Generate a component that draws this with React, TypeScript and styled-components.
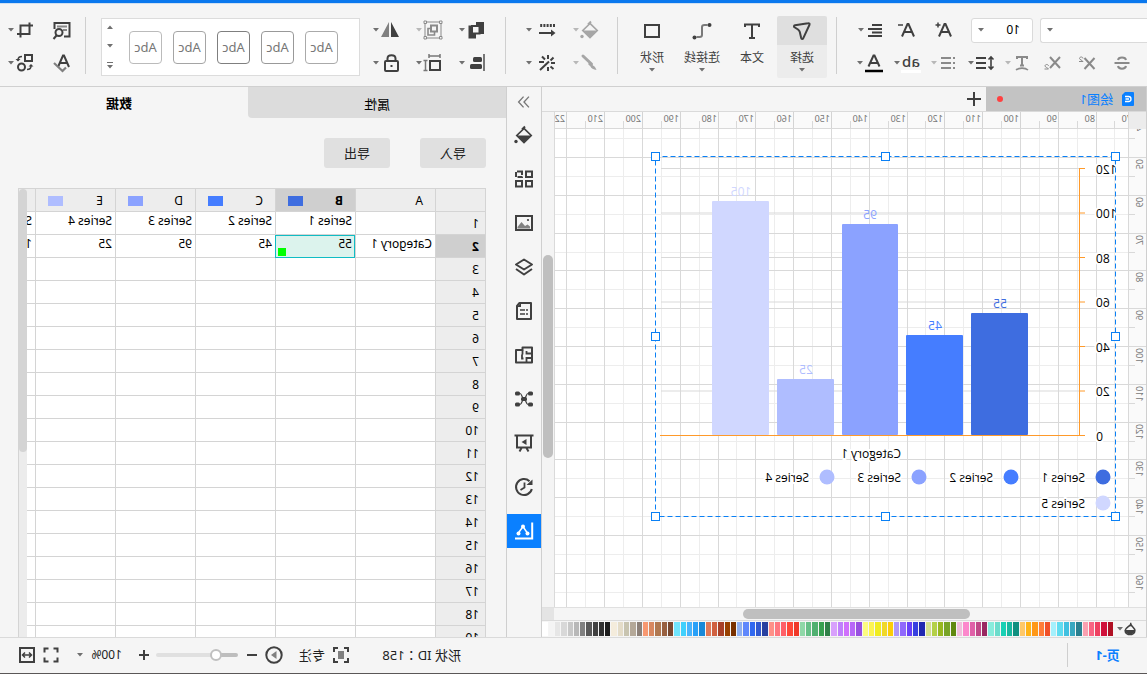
import React, { useLayoutEffect, useRef, useState } from "react";
import styled, { createGlobalStyle, css } from "styled-components";

const GlobalStyle = createGlobalStyle`
  * { box-sizing: border-box; }
  body { margin: 0; background: #f5f5f5; overflow: hidden; }
  button, select, input { font: inherit; color: inherit; margin: 0; }
  button { border: 0; padding: 0; background: none; cursor: pointer; }
`;

const sans = `"Noto Sans", "Noto Sans CJK SC", sans-serif`;

/* The whole workspace is presented flipped from left to right. */
const Shell = styled.div`
  display: flex;
  flex-direction: column;
  height: 100vh;
  overflow: hidden;
  transform: scaleX(-1);
  background: #f5f5f5;
  color: #000;
  font: 12px/16px ${sans};
  border-bottom: 1px solid #5a5757;
`;

const TopBar = styled.div`
  flex: none;
  height: 4px;
  background: #0a78ee;
  border-bottom: 1px solid #cfe0f2;
`;

/* ---------- toolbar ---------- */

const Toolbar = styled.header`
  flex: none;
  display: flex;
  align-items: flex-start;
  height: 83px;
  padding-top: 13px;
  border-bottom: 1px solid #d0d0d0;
  color: #404040;
`;

const Rows = styled.div<{ $width?: number }>`
  flex: none;
  display: flex;
  flex-direction: column;
  gap: 7px;
  width: ${(p) => (p.$width ? `${p.$width}px` : "auto")};
`;

const Row = styled.div<{ $gap: number; $indent?: number }>`
  display: flex;
  align-items: center;
  height: 26px;
  gap: ${(p) => p.$gap}px;
  padding-left: ${(p) => p.$indent ?? 0}px;
`;

const Separator = styled.div<{ $before: number; $after: number }>`
  flex: none;
  width: 1px;
  height: 57px;
  background: #cfcfcf;
  margin: 0 ${(p) => p.$after}px 0 ${(p) => p.$before}px;
`;

const Tool = styled.button<{ $dim?: boolean; $wide?: boolean }>`
  display: flex;
  align-items: center;
  gap: ${(p) => (p.$wide ? 5 : 1)}px;
  height: 26px;
  color: ${(p) => (p.$dim ? "#a6a6a6" : "#404040")};
`;

const Picker = styled.div<{ $width: number; $flat?: boolean }>`
  display: grid;
  align-items: center;
  width: ${(p) => p.$width}px;
  height: 25px;
  border: 1px solid #dadada;
  border-left-width: ${(p) => (p.$flat ? 0 : 1)}px;
  border-radius: ${(p) => (p.$flat ? "0 3px 3px 0" : "3px")};
  background: #fff;
  > * { grid-area: 1 / 1; }
  > svg { justify-self: end; margin-right: 6px; pointer-events: none; }
  select {
    appearance: none;
    width: 100%;
    height: 23px;
    border: 0;
    padding: 0 12px;
    background: transparent;
    color: #000;
  }
`;

const BigTool = styled.button<{ $active?: boolean }>`
  flex: none;
  display: grid;
  grid-template-rows: 29px 23px 4px;
  place-items: center;
  align-content: start;
  width: 50px;
  height: 62px;
  margin-top: -1px;
  border-radius: 2px;
  color: #404040;
  white-space: nowrap;
  span { padding-top: 2px; }
  ${(p) =>
    p.$active &&
    css`
      background: linear-gradient(#dfdfdf 29px, #ececec 29px);
    `}
`;

const Gallery = styled.div`
  flex: none;
  display: flex;
  align-items: center;
  gap: 11px;
  width: 259px;
  height: 58px;
  margin: 1px 0 0 13px;
  padding-left: 21px;
  border: 1px solid #dcdcdc;
  background: #fff;
`;

const Preset = styled.button<{ $edge: string }>`
  width: 33px;
  height: 33px;
  border: 1px solid ${(p) => p.$edge};
  border-radius: 4px;
  color: #777;
  font-size: 13px;
`;

const GalleryScroll = styled.div`
  display: flex;
  flex-direction: column;
  align-items: center;
  justify-content: space-between;
  height: 44px;
  margin-left: 5px;
  button { display: flex; }
`;

const Caret = ({ dim, up }: { dim?: boolean; up?: boolean }) => (
  <svg width="6" height="4" viewBox="0 0 6 4" aria-hidden="true">
    <path d={up ? "M0 4h6L3 .5z" : "M0 0h6L3 3.500z"} fill={dim ? "#b8b8b8" : "#707070"} />
  </svg>
);

const Icon = ({ children, size = 20 }: { children: React.ReactNode; size?: number }) => (
  <svg width={size} height={size} viewBox="0 0 20 20" fill="none" stroke="currentColor" strokeWidth="2" aria-hidden="true">
    {children}
  </svg>
);

const solid = { fill: "currentColor", stroke: "none" } as const;
const faint = { fill: "#808080", stroke: "none" } as const;

const icons: Record<string, React.ReactNode> = {
  bigger: (<><path d="M3 16.500 8.500 4h1L15 16.500M5.200 12h7.600" /><path d="M13.500 5h5M16 2.500v5" strokeWidth="1.500" /></>),
  smaller: (<><path d="M3 16.500 8.500 4h1L15 16.500M5.200 12h7.600" /><path d="M14 5h5" strokeWidth="1.500" /></>),
  align: <path d="M3 5h10M3 9h14M3 12.500h10M3 16h14" />,
  strike: (<g stroke="#8a8a8a"><path d="M2.500 10h15" /><path d="M14 7C13.500 3.500 6.500 3.500 6 7M6 13c.5 3.500 7.500 3.500 8 0" /></g>),
  sup: (<g stroke="#8a8a8a"><path d="M2.500 5l10 11M12.500 5 2.500 16" /><path d="M14 5.500c0-2 3.500-2 3.500 0 0 1.200-3 1.800-3.500 3h4" strokeWidth="1" /></g>),
  sub: (<g stroke="#8a8a8a"><path d="M2 4l10 11M12 4 2 15" /><path d="M13.500 13c0-2 3.500-2 3.500 0 0 1.200-3 1.800-3.500 3h4" strokeWidth="1" /></g>),
  curveText: (<g stroke="#8a8a8a"><path d="M5 4h10M10 4v9M8 12.500h4M5 3v3M15 3v3" /><path d="M4 17c3-2.500 9-2.500 12 0" strokeWidth="1.600" /></g>),
  spacing: (<><path d="M9 5h10M9 10h10M9 15h10" /><path d="M4 4v12M1.500 6.500 4 4l2.500 2.500M1.500 13.500 4 16l2.500-2.500" strokeWidth="1.600" /></>),
  list: (<g stroke="#8a8a8a"><path d="M7 5h10M7 10h10M7 15h10" /><path d="M3 5h2M3 10h2M3 15h2" /></g>),
  color: (<><path d="M4.500 13.500 9.500 2.500h1l5 11M6.500 10h7" /><path d="M1 18h18" stroke="#000" strokeWidth="2.500" /></>),
  cursor: <path d="M2.500 3.800C2 2.800 3 2 4 2.200L17 4.300c1.200.2 1.400 1.300.5 2L14 8.500c-1 .8-1.500 1.300-1.800 2.500L10.800 17c-.3 1.100-1.500 1.300-2 .3z" />,
  text: <path d="M3 6V3.500h14V6M10 3.500v13M7 17h6" />,
  connector: (<><path d="M4.500 4h3c2 0 2.500.5 2.500 2v8c0 1.500.5 2 2.500 2h3" stroke="#7a7a7a" /><circle cx="2.500" cy="4" r="2" {...solid} /><circle cx="17.500" cy="16.500" r="2" {...solid} /></>),
  shape: <rect x="3" y="4" width="14" height="12" />,
  bucket: (<><path d="M9 1.500l3 3" /><path d="M10 3.500 17.200 10.500 10 17.500 2.800 10.500z" strokeWidth="1.700" /><path d="M3 10.500h14l-7 7z" {...solid} /><circle cx="18" cy="16.500" r="1.700" {...solid} /></>),
  drop: (<><path d="M9 1v5" /><path d="M9 3.500C12 7 17 9 17 12c0 4-4 6-7 6s-7-2-7-6c0-3 4-5 6-8.500z" strokeWidth="2.200" /><path d="M3 11.500h14c0 4-4 6.500-7 6.500s-7-2.500-7-6.500z" {...solid} /></>),
  lineStyle: (<><path d="M5 13h13" /><path d="M6 9.500 1.500 13 6 16.500z" {...solid} /><path d="M2 5.500h16" strokeWidth="3" strokeDasharray="2 1.200" /></>),
  brush: (<><path d="M17 3 8.500 11" strokeWidth="3" strokeLinecap="round" /><path d="M10 9 7 12.500c-2 .5-2.500 2.500-3.500 4.500 3-.5 5.500-1.500 6-3.500l2.500-2.500z" {...solid} /></>),
  sparkle: <path d="M8 8.500l9 8.500M9 2v4M9 14v4M2 10h4M13 9h5M3.500 4.500l3 3M15 3.500l-3 3M3.500 16l3-2.500" />,
  front: (<><path d="M2 2h8v3.500h7.500V18.500H10V14H2z" {...solid} /><rect x="6.500" y="6" width="7.500" height="7.500" fill="#f5f5f5" /></>),
  group: (<g stroke="#8a8a8a"><rect x="2" y="2" width="16" height="16" strokeWidth="1" /><rect x="6" y="5.500" width="6" height="6" /><path d="M12 8.500h3V15H8.500v-3.500" strokeWidth="1.600" /><path d="M1 1h2.500v2.500H1zM16.500 1H19v2.500h-2.500zM1 16.500h2.500V19H1zM16.500 16.500H19V19h-2.500z" fill="#f5f5f5" strokeWidth="1" /></g>),
  flip: (<><path d="M9 2v15H1z" {...solid} /><path d="M11 2v15h8z" {...faint} /></>),
  alignObj: (<><path d="M2 1v17" stroke="#777" /><rect x="4" y="4" width="9" height="5" rx="1.500" {...solid} /><rect x="4" y="11" width="12" height="5" rx="1.500" {...solid} /></>),
  sizeObj: (<><rect x="3" y="8" width="10" height="9" /><path d="M3 3h11M3 1v4M14 1v4M17.500 7.500v10M15.500 7.500h4M15.500 17.500h4" stroke="#777" strokeWidth="1.500" /></>),
  lock: (<><rect x="2" y="8" width="13" height="10" rx="1" /><path d="M4.500 8V5.500c0-4.500 8-4.500 8 0V8" /><path d="M7.500 12h2v2h-2z" {...solid} /></>),
  findDoc: (<><path d="M8 16.500H2.500V3h15v6" /><path d="M5 6.500h10M5 10h4" stroke="#888" /><circle cx="13" cy="12.500" r="3.500" /><path d="M15.500 15.500 18.500 19" /></>),
  spell: (<><path d="M3 14 8 2.500h1L14 14M5 10h7" /><path d="M6 14.500l3.500 3.500L18 10" stroke="#808080" strokeWidth="2.200" /></>),
  crop: <path d="M2 5.500h12.500v12M5.500 2.500V14H18" />,
  swap: (<><rect x="3" y="2" width="7" height="6" /><circle cx="13.500" cy="14" r="3.500" /><path d="M13 3.500c2.500 0 4 1 4 3.500M8 16.500c-3 0-4-1-4-3.500" strokeWidth="1.500" /><path d="M14.500 6h5L17 8.500zM1.500 13.500h5L4 11z" {...solid} /></>),
  tiles: (<><path d="M2 2.500h6v5.500H2zM2 12h6v5.500H2zM12 12h6v5.500h-6z" /><path d="M12 2.500h6v5.500h-6z" strokeDasharray="5 1.500" /></>),
  image: (<><rect x="2" y="3" width="16" height="14" /><path d="M4 15.500v-2l2.500-2 2.500 1.500 3.500-4 4 5v1.500z" {...faint} /><circle cx="6" cy="7" r="1.100" {...solid} /></>),
  layers: (<><path d="M10 2.500 18 7.500 10 12.500 2 7.500z" strokeLinejoin="round" /><path d="M2 12l8 5.500 8-5.500" strokeLinejoin="round" /></>),
  page: (<><path d="M3 2h11.500l2.500 3v13H3z" strokeLinejoin="round" /><path d="M13 2v4h4z" {...solid} /><path d="M6 9h2M9 9h5M6 13h2M9 13h5" strokeWidth="1.600" /></>),
  plan: (<><path d="M2 2.500h9.500V5H18v12.500H2z" strokeLinejoin="round" /><path d="M2 8.500h5.500V6M11.500 5v4.500M2 13h5.500v4.500M12 9.500v4h-1.500" strokeWidth="1.800" /></>),
  network: (<><path d="M4 4.500h2c2 0 2 5.500 4 5.500s2-5.500 4-5.500h2M4 15.500h2c2 0 2-5.500 4-5.500s2 5.500 4 5.500h2" strokeWidth="1.200" /><rect x="1" y="2.500" width="5" height="4" rx="1.500" {...solid} /><rect x="14" y="2.500" width="5" height="4" rx="1.500" {...solid} /><rect x="1" y="13.500" width="5" height="4" rx="1.500" {...solid} /><rect x="14" y="13.500" width="5" height="4" rx="1.500" {...solid} /><rect x="7" y="8" width="6" height="4" rx="1.500" {...solid} /></>),
  board: (<><path d="M.500 2.500h19M3 3v11.500h14V3M7.500 15 5.500 18.500M12.500 15l2 3.500" /><path d="M12.500 9l-5-3v6z" {...solid} /></>),
  history: (<><path d="M4.500 4.200A8 8 0 1 1 2.200 12" /><path d="M1.500 2.500v5.500h6z" {...solid} /><path d="M9.500 5.500v5l4 2.500" strokeWidth="1.800" /></>),
  chart: (<><path d="M1.800 1.500v16H19" stroke="#fff" /><path d="M6 13l5-7.500 5 7" stroke="#fff" strokeWidth="1.500" /><circle cx="6.500" cy="12.500" r="2" fill="#fff" stroke="none" /><circle cx="11" cy="5.500" r="2" fill="#fff" stroke="none" /><circle cx="15.500" cy="12.500" r="2" fill="#fff" stroke="none" /></>),
  collapse: <path d="M4.500 4 10 10l-5.500 6M10.500 4l5.500 6-5.500 6" stroke="#777" strokeWidth="1.500" />,
  plus: <path d="M3 10h14M10 3v14" />,
  focus: (<><path d="M3 7V3h4M13 3h4v4M17 13v4h-4M7 17H3v-4" /><rect x="7" y="6" width="6" height="8" {...faint} /></>),
  play: (<><circle cx="10" cy="10" r="7.700" /><path d="M7.500 6v8l5.500-4z" {...faint} /></>),
  minus: <path d="M5 10h10" />,
  add: <path d="M5 10h10M10 5v10" />,
  fit: <path d="M3.500 7.500v-4h4M12.500 3.500h4v4M16.500 12.500v4h-4M7.500 16.500h-4v-4" />,
  fitWidth: (<><rect x="3" y="3" width="14" height="14" /><path d="M6 10h8M8 7.500 5.500 10 8 12.500M12 7.500l2.500 2.500-2.500 2.500" strokeWidth="1.500" /></>),
};

const IconTool = ({ name, label, dim, caret, wide }: { name: string; label: string; dim?: boolean; caret?: boolean; wide?: boolean }) => (
  <Tool type="button" aria-label={label} $dim={dim} $wide={wide}>
    <Icon>{icons[name]}</Icon>
    {caret && <Caret dim={dim} />}
  </Tool>
);

const BoldLetters = styled.span`
  width: 20px;
  height: 20px;
  border-bottom: 3px solid #fff;
  font-size: 15px;
  line-height: 16px;
  font-weight: 500;
  text-align: center;
`;

/* ---------- work area ---------- */

const Main = styled.main`
  flex: 1;
  display: flex;
  min-height: 0;
`;

const Editor = styled.section`
  flex: 1;
  min-width: 0;
  display: flex;
  flex-direction: column;
  border-left: 1px solid #cfcfcf;
  border-right: 1px solid #cfcfcf;
`;

const DocTabs = styled.div`
  flex: none;
  display: flex;
  align-items: center;
  height: 25px;
  border-bottom: 1px solid #dadada;
`;

const DocTab = styled.button`
  display: flex;
  align-items: center;
  width: 160px;
  height: 24px;
  padding: 0 11px 0 12px;
  gap: 9px;
  background: #c3c3c3;
  color: #0a80ff;
  font-size: 13px;
`;

const Dot = styled.span`
  width: 6px;
  height: 6px;
  margin-left: auto;
  border-radius: 50%;
  background: #ff4040;
`;

const AddTab = styled.button`
  display: flex;
  margin-left: 2px;
  color: #404040;
`;

const SheetRow = styled.div`
  flex: 1;
  display: flex;
  min-height: 0;
`;

const Sheet = styled.svg`
  flex: 1;
  min-width: 0;
  height: 100%;
  background: #fff;
  border-right: 1px solid #dadada;
  font: 12px "Open Sans", "Noto Sans", sans-serif;
`;

const VTrack = styled.div`
  width: 12px;
  padding: 143px 1px 0;
  background: #f4f4f4;
`;

const VThumb = styled.div`
  height: 203px;
  border-radius: 5px;
  background: #bfbfbf;
`;

const HTrack = styled.div`
  flex: none;
  display: flex;
  align-items: center;
  height: 14px;
  padding-left: 176px;
  border-top: 1px solid #e0e0e0;
  border-bottom: 1px solid #dadada;
`;

const HThumb = styled.div`
  width: 227px;
  height: 10px;
  border-radius: 5px;
  background: #bfbfbf;
`;

const Corner = styled.div`
  width: 12px;
  height: 12px;
  margin-left: auto;
  background: #e4e4e4;
`;

const Palette = styled.div`
  flex: none;
  display: flex;
  align-items: center;
  height: 16px;
`;

const PaletteTool = styled.button`
  display: flex;
  align-items: center;
  width: 33px;
  padding-left: 9px;
  color: #404040;
`;

const Swatches = styled.div`
  flex: 1;
  display: flex;
  gap: 1px;
  height: 14px;
`;

const Swatch = styled.button<{ $c: string }>`
  flex: 1;
  background: ${(p) => p.$c};
`;

const palette = (
  "b01024 d0103a ee4060 f96482 f9a0b0 2a8090 38a8c0 40c0e0 60dcf0 a4f0fc f05028 ff7c38 ff9818 ffb418 ffc868 " +
  "109080 18b8a0 18d0b4 6cdccc 88ecdc 982860 c04888 e060a8 fc88cc f0c0dc 608810 78a428 98b820 b4d048 d4e090 " +
  "2028b0 3840e0 6840f8 9068fc b098f8 fccc08 f0d828 f0ec20 fcf450 fcfc80 9850e0 b868f8 d070fc c080fc d8a0fc " +
  "308048 38a050 50b070 68c088 90d8a8 f03828 ff4838 ff6068 ff7880 ff9088 2840a0 3058d0 3068f0 6088fc 90b0f0 " +
  "783000 984000 a84028 d06040 e07858 1888d8 28a0f8 48b4fc 40d0fc 70e4fc 784830 986040 b07850 d88860 f89870 " +
  "8c8078 b4a898 c8c4b0 e4dcc8 f4ecdc 1c1c1c 303030 404040 585858 808080 b8b8b8 c8c8c8 d8d8d8 e6e6e6 f4f4f4 ffffff"
).split(" ");

const Halo = styled.text`
  paint-order: stroke;
  stroke: #fff;
  stroke-width: 4px;
  stroke-linejoin: round;
`;

const STEP = 37.8;
const series = [
  { name: "Series 1", value: 55, x: 119, w: 57, top: 313, color: "#3e6de0" },
  { name: "Series 2", value: 45, x: 184, w: 57, top: 335, color: "#457dff" },
  { name: "Series 3", value: 95, x: 249, w: 56, top: 224, color: "#8ba2ff" },
  { name: "Series 4", value: 25, x: 313, w: 57, top: 379, color: "#afbdff" },
  { name: "Series 5", value: 105, x: 378, w: 57, top: 201, color: "#d0d7ff" },
];

const range = (n: number) => Array.from({ length: n }, (_, i) => i);

const Drawing = () => {
  const ref = useRef<SVGSVGElement>(null);
  const [size, setSize] = useState({ w: 590, h: 495 });
  useLayoutEffect(() => {
    const node = ref.current;
    if (!node) return;
    const measure = () => setSize({ w: node.clientWidth || 590, h: node.clientHeight || 495 });
    measure();
    const observer = new ResizeObserver(measure);
    observer.observe(node);
    return () => observer.disconnect();
  }, []);

  const cols = range(Math.ceil((size.w - 12) / STEP)).map((i) => ({ v: 70 + i * 10, major: Math.round(12.6 + i * STEP), minor: Math.round(31.5 + i * STEP) }));
  const rows = range(Math.ceil((size.h - 7) / STEP)).map((i) => ({ v: 40 + i * 10, major: Math.round(119.2 + i * STEP), minor: Math.round(138.1 + i * STEP) }));
  const ticks = range(7).map((i) => ({ v: 120 - i * 20, y: 168.5 + i * 44.5 }));
  return (
    <Sheet ref={ref} role="img" aria-label="Category 1">
      <defs>
        <clipPath id="side"><rect x="1" y="129" width="18" height="2000" /></clipPath>
        <clipPath id="head"><rect x="19" y="112" width="4000" height="17" /></clipPath>
      </defs>
      <g transform="translate(-1 -112)">
        <g shapeRendering="crispEdges">
          {cols.map((c) => <rect key={c.v} x={c.minor} y="129" width="1" height="2000" fill="#ededed" />)}
          {rows.map((r) => <rect key={r.v} x="19" y={r.minor} width="4000" height="1" fill="#ededed" />)}
          {cols.map((c) => <rect key={c.v} x={c.major} y="129" width="1" height="2000" fill="#d9d9d9" />)}
          {rows.map((r) => <rect key={r.v} x="19" y={r.major} width="4000" height="1" fill="#d9d9d9" />)}
          <rect x="1" y="112" width="4000" height="16" fill="#fafafa" />
          <rect x="1" y="129" width="17" height="2000" fill="#fafafa" />
          <rect x="1" y="128" width="4000" height="1" fill="#d9d9d9" />
          <rect x="18" y="112" width="1" height="2000" fill="#d9d9d9" />
          <rect x="1" y="112" width="17" height="17" fill="#ececec" />
        </g>
        <g clipPath="url(#head)" fontSize="9" fill="#777" fontFamily="Noto Sans">
          {cols.map((c) => (
            <g key={c.v}>
              <rect x={c.major} y="112" width="1" height="16" fill="#d4d4d4" />
              <rect x={c.minor} y="121" width="1" height="7" fill="#d9d9d9" />
              <text x={c.major + 2} y="122">{c.v}</text>
            </g>
          ))}
        </g>
        <g clipPath="url(#side)" fontSize="9" fill="#777" fontFamily="Noto Sans">
          {rows.map((r) => (
            <g key={r.v}>
              <rect x="1" y={r.major} width="17" height="1" fill="#d9d9d9" />
              <rect x="12" y={r.minor} width="6" height="1" fill="#d9d9d9" />
              <text transform={`translate(11 ${r.major + 2}) rotate(-90)`} textAnchor="end">{r.v}</text>
            </g>
          ))}
        </g>

        {ticks.map((t) => <path key={t.v} d={`M68 ${t.y}H486`} stroke="#d9d9d9" />)}
        <path d="M67.500 168V436M62 435.500H487" stroke="#ff9a2a" fill="none" />
        {ticks.map((t) => <path key={t.v} d={`M62 ${t.y}H67`} stroke="#ff9a2a" />)}
        {ticks.map((t) => <Halo key={t.v} x="51" y={Math.round(t.y + 5)} textAnchor="end">{t.v}</Halo>)}
        {series.map((s) => (
          <g key={s.name} fill={s.color}>
            <rect x={s.x} y={s.top} width={s.w} height={435 - s.top} rx="1" />
            <text x={s.x + 28} y={s.top - 5} textAnchor="middle">{s.value}</text>
          </g>
        ))}
        <Halo x="276" y="458" textAnchor="middle">Category 1</Halo>
        {series.map((s, i) => {
          const x = 44 + (i % 4) * 92;
          const y = i < 4 ? 477 : 503;
          return (
            <g key={s.name}>
              <circle cx={x} cy={y} r="7.500" fill={s.color} />
              <Halo x={x + 18} y={y + 5}>{s.name}</Halo>
            </g>
          );
        })}

        <rect x="31.500" y="156.500" width="460" height="360" fill="none" stroke="#0a80f5" strokeDasharray="5 3" />
        {[31, 261, 491].flatMap((x) =>
          [156, 336, 516]
            .filter((y) => !(x === 261 && y === 336))
            .map((y) => <rect key={`${x}-${y}`} x={x - 3.5} y={y - 3.5} width="8" height="8" fill="#fff" stroke="#0a80f5" />),
        )}
      </g>
    </Sheet>
  );
};

/* ---------- side rail ---------- */

const Rail = styled.nav`
  flex: none;
  display: flex;
  flex-direction: column;
  align-items: center;
  gap: 10px;
  width: 35px;
  border-right: 1px solid #cfcfcf;
  color: #404040;
`;

const RailButton = styled.button<{ $active?: boolean; $small?: boolean }>`
  display: grid;
  place-items: center;
  width: 34px;
  height: ${(p) => (p.$small ? 18 : 34)}px;
  margin-top: ${(p) => (p.$small ? 6 : 0)}px;
  margin-bottom: ${(p) => (p.$small ? -3 : 0)}px;
  background: ${(p) => (p.$active ? "#0a80ff" : "transparent")};
`;

const rail: [string, string][] = [
  ["bucket", "填充"], ["tiles", "符号"], ["image", "图片"], ["layers", "图层"], ["page", "页面"],
  ["plan", "平面图"], ["network", "连接"], ["board", "演示"], ["history", "历史"], ["chart", "图表"],
];

/* ---------- data panel ---------- */

const Panel = styled.aside`
  flex: none;
  display: flex;
  flex-direction: column;
  width: 506px;
  min-height: 0;
`;

const PanelTabs = styled.div`
  flex: none;
  display: flex;
  height: 31px;
`;

const PanelTab = styled.button<{ $active?: boolean }>`
  flex: 1;
  padding: 2px 0 0;
  color: #000;
  font-size: 13px;
  font-weight: 400;
  background: #dcdcdc;
  border-radius: 0 0 4px 0;
  ${(p) =>
    p.$active
      ? css`
          padding: 0 0 0 10px;
          font-weight: 700;
          background: transparent;
        `
      : css`
          flex: 0 0 258px;
        `}
`;

const Actions = styled.div`
  display: flex;
  gap: 30px;
  padding: 20px;
`;

const Action = styled.button`
  width: 66px;
  height: 30px;
  border-radius: 3px;
  background: #e0e0e0;
  color: #222;
  font-size: 13px;
`;

const GridArea = styled.div`
  flex: 1;
  display: flex;
  min-height: 0;
  margin: 0 18px 0 20px;
  border: solid #d4d4d4;
  border-width: 1px 1px 0 1px;
  overflow: hidden;
`;

const GridClip = styled.div`
  flex: 1;
  min-width: 0;
  overflow: hidden;
`;

const DataTable = styled.table`
  width: 530px;
  table-layout: fixed;
  border-collapse: separate;
  border-spacing: 0;
  background: #fff;
  tr { height: 23px; }
  th, td {
    height: 23px;
    padding: 0;
    border: solid #d4d4d4;
    border-width: 0 1px 1px 0;
    text-align: left;
    font-weight: 400;
    overflow: hidden;
    white-space: nowrap;
  }
  td { vertical-align: top; padding: 1px 0 0 3px; }
`;

const RowHead = styled.th<{ $on?: boolean }>`
  && {
    width: 50px;
    padding: 2px 0 0 6px;
    background: ${(p) => (p.$on ? "#cfcfcf" : "#ededed")};
    font-weight: ${(p) => (p.$on ? 700 : 400)};
  }
`;

const ColHead = styled.th<{ $on?: boolean }>`
  && {
    width: 80px;
    background: ${(p) => (p.$on ? "#cfcfcf" : "#ededed")};
    font-weight: ${(p) => (p.$on ? 700 : 400)};
  }
`;

const ColHeadInner = styled.div`
  display: flex;
  align-items: center;
  justify-content: space-between;
  padding: 1px 12px 0;
`;

const Chip = styled.span<{ $c: string }>`
  width: 15px;
  height: 10px;
  background: ${(p) => p.$c};
`;

const ActiveCell = styled.td`
  && {
    background: linear-gradient(#00ff00, #00ff00) right 2px bottom 1px / 8px 8px no-repeat #dcf3ed;
    border-color: #10bcc4;
    box-shadow: inset 1px 1px #10bcc4;
  }
`;

const GridTrack = styled.div`
  flex: none;
  width: 8px;
  background: #ececec;
`;

const GridThumb = styled.div`
  height: 263px;
  border-radius: 4px;
  background: #d4d4d4;
`;

const heads = ["A", "B", "C", "D", "E", "F"];
const cells: Record<number, string[]> = {
  1: ["", ...series.map((s) => s.name)],
  2: ["Category 1", ...series.map((s) => String(s.value))],
};

/* ---------- status bar ---------- */

const Status = styled.footer`
  flex: none;
  display: flex;
  align-items: center;
  height: 36px;
  padding-bottom: 2px;
  border-top: 1px solid #dadada;
  font-size: 13px;
`;

const PageTab = styled.button`
  width: 79px;
  color: #0a80ff;
  font-weight: 700;
`;

const StatusRule = styled.div`
  width: 1px;
  height: 24px;
  background: #cfcfcf;
`;

const StatusRight = styled.div`
  display: flex;
  align-items: center;
  width: 461px;
  margin-left: auto;
  button { display: flex; align-items: center; color: #404040; }
`;

const ShapeId = styled.span`
  width: 110px;
  color: #222;
  font-family: "Noto Sans", "Noto Sans CJK TC", sans-serif;
`;

const FocusTool = styled.button`
  gap: 6px;
  margin-right: 15px;
  span { color: #222; }
`;

const StepDown = styled.button`
  padding: 0 2px;
`;

const Zoom = styled.input`
  appearance: none;
  width: 82px;
  height: 4px;
  && { margin: 0 2px; }
  border-radius: 2px;
  background: linear-gradient(90deg, #bdbdbd 22px, #e0e0e0 22px);
  &::-webkit-slider-thumb {
    appearance: none;
    width: 12px;
    height: 12px;
    border: 2px solid #c0c0c0;
    border-radius: 50%;
    background: #fff;
  }
`;

const Percent = styled.button`
  gap: 8px;
  && { margin: 0 16px 0 12px; }
  font-size: 12px;
  span { color: #222; }
`;

const FitTools = styled.div`
  display: flex;
  gap: 4px;
`;

export default function App() {
  return (
    <>
      <GlobalStyle />
      <Shell>
        <TopBar />
        <Toolbar>
          <Rows $width={300}>
            <Row $gap={17}>
              <Row $gap={7}>
                <Picker $width={107} $flat>
                  <select aria-label="字体"><option> </option></select>
                  <Caret />
                </Picker>
                <Picker $width={62}>
                  <select aria-label="字号"><option>10</option></select>
                  <Caret />
                </Picker>
              </Row>
              <IconTool name="bigger" label="增大字号" />
              <Row $gap={12}>
                <IconTool name="smaller" label="减小字号" />
                <IconTool name="align" label="对齐" caret />
              </Row>
            </Row>
            <Row $gap={10} $indent={15}>
              <Row $gap={15}>
                <IconTool name="strike" label="删除线" dim />
                <IconTool name="sup" label="上标" dim />
                <IconTool name="sub" label="下标" dim />
              </Row>
              <Row $gap={10}>
                <IconTool name="curveText" label="弧形文字" dim caret />
                <IconTool name="spacing" label="行距" caret />
                <IconTool name="list" label="列表" dim caret />
                <Tool type="button" aria-label="高亮"><BoldLetters>ab</BoldLetters><Caret /></Tool>
                <IconTool name="color" label="字体颜色" caret />
              </Row>
            </Row>
          </Rows>
          <Separator $before={10} $after={9} />
          <BigTool type="button" $active><Icon>{icons.cursor}</Icon><span>选择</span><Caret /></BigTool>
          <BigTool type="button"><Icon>{icons.text}</Icon><span>文本</span></BigTool>
          <BigTool type="button"><Icon>{icons.connector}</Icon><span>连接线</span><Caret /></BigTool>
          <BigTool type="button"><Icon>{icons.shape}</Icon><span>形状</span><Caret /></BigTool>
          <Separator $before={9} $after={17} />
          <Rows>
            <Row $gap={16}>
              <IconTool name="bucket" label="填充" dim caret />
              <IconTool name="lineStyle" label="线条样式" caret wide />
            </Row>
            <Row $gap={16}>
              <IconTool name="brush" label="画笔" dim caret />
              <IconTool name="sparkle" label="效果" caret wide />
            </Row>
          </Rows>
          <Separator $before={20} $after={19} />
          <Rows>
            <Row $gap={16}>
              <IconTool name="front" label="置于顶层" caret />
              <IconTool name="group" label="组合" dim caret />
              <IconTool name="flip" label="翻转" caret />
            </Row>
            <Row $gap={16}>
              <IconTool name="alignObj" label="对齐形状" caret />
              <IconTool name="sizeObj" label="尺寸" caret />
              <IconTool name="lock" label="锁定" caret />
            </Row>
          </Rows>
          <Gallery>
            {["#aaaaaa", "#999999", "#7f7f7f", "#a5a5a5", "#bbbbbb"].map((c) => (
              <Preset key={c} type="button" $edge={c}>Abc</Preset>
            ))}
            <GalleryScroll>
              <button type="button" aria-label="上一行"><Caret up /></button>
              <button type="button" aria-label="下一行"><Caret /></button>
              <button type="button" aria-label="更多">
                <svg width="6" height="7" viewBox="0 0 6 7" fill="#707070"><path d="M0 0h6v1H0zM0 3h6L3 6.500z" /></svg>
              </button>
            </GalleryScroll>
          </Gallery>
          <Separator $before={15} $after={13} />
          <Rows>
            <Row $gap={17}>
              <IconTool name="findDoc" label="查找" />
              <IconTool name="crop" label="裁剪" caret />
            </Row>
            <Row $gap={17}>
              <IconTool name="spell" label="拼写检查" />
              <IconTool name="swap" label="替换形状" caret />
            </Row>
          </Rows>
        </Toolbar>

        <Main>
          <Editor>
            <DocTabs>
              <DocTab type="button">
                <svg width="12" height="14" viewBox="0 0 12 14" aria-hidden="true">
                  <path d="M1 0h8l3 3v10a1 1 0 0 1-1 1H1a1 1 0 0 1-1-1V1a1 1 0 0 1 1-1z" fill="#0a80ff" />
                  <path d="M9 4.500H5.500a2.500 2.500 0 0 0 0 5H9M8.500 7H5" stroke="#fff" strokeWidth="1.300" fill="none" />
                </svg>
                绘图1
                <Dot />
              </DocTab>
              <AddTab type="button" aria-label="新建"><Icon>{icons.plus}</Icon></AddTab>
            </DocTabs>
            <SheetRow>
              <Drawing />
              <VTrack><VThumb /></VTrack>
            </SheetRow>
            <HTrack><HThumb /><Corner /></HTrack>
            <Palette>
              <PaletteTool type="button" aria-label="颜色"><Icon size={14}>{icons.drop}</Icon><Caret /></PaletteTool>
              <Swatches>{palette.map((c) => <Swatch key={c} type="button" aria-label={`#${c}`} $c={`#${c}`} />)}</Swatches>
            </Palette>
          </Editor>

          <Rail>
            <RailButton type="button" $small aria-label="收起"><Icon size={18}>{icons.collapse}</Icon></RailButton>
            {rail.map(([name, label]) => (
              <RailButton key={name} type="button" aria-label={label} $active={name === "chart"}>
                <Icon>{icons[name]}</Icon>
              </RailButton>
            ))}
          </Rail>

          <Panel>
            <PanelTabs>
              <PanelTab type="button">属性</PanelTab>
              <PanelTab type="button" $active>数据</PanelTab>
            </PanelTabs>
            <Actions>
              <Action type="button">导入</Action>
              <Action type="button">导出</Action>
            </Actions>
            <GridArea>
              <GridClip>
                <DataTable>
                  <thead>
                    <tr>
                      <RowHead />
                      {heads.map((h, i) => (
                        <ColHead key={h} scope="col" $on={h === "B"}>
                          <ColHeadInner>{h}{i > 0 && <Chip $c={series[i - 1].color} />}</ColHeadInner>
                        </ColHead>
                      ))}
                    </tr>
                  </thead>
                  <tbody>
                    {range(19).map((i) => (
                      <tr key={i}>
                        <RowHead scope="row" $on={i === 1}>{i + 1}</RowHead>
                        {heads.map((h, j) => {
                          const text = cells[i + 1]?.[j] ?? "";
                          return i === 1 && j === 1 ? <ActiveCell key={h}>{text}</ActiveCell> : <td key={h}>{text}</td>;
                        })}
                      </tr>
                    ))}
                  </tbody>
                </DataTable>
              </GridClip>
              <GridTrack><GridThumb /></GridTrack>
            </GridArea>
          </Panel>
        </Main>

        <Status>
          <PageTab type="button">页-1</PageTab>
          <StatusRule />
          <StatusRight>
            <ShapeId>形状 ID：158</ShapeId>
            <FocusTool type="button"><Icon>{icons.focus}</Icon><span>专注</span></FocusTool>
            <button type="button" aria-label="播放"><Icon>{icons.play}</Icon></button>
            <StepDown type="button" aria-label="缩小"><Icon>{icons.minus}</Icon></StepDown>
            <Zoom type="range" aria-label="缩放" min={0} max={100} defaultValue={23} />
            <button type="button" aria-label="放大"><Icon>{icons.add}</Icon></button>
            <Percent type="button"><span>100%</span><Caret /></Percent>
            <FitTools>
              <button type="button" aria-label="适应页面"><Icon>{icons.fit}</Icon></button>
              <button type="button" aria-label="适应宽度"><Icon>{icons.fitWidth}</Icon></button>
            </FitTools>
          </StatusRight>
        </Status>
      </Shell>
    </>
  );
}
